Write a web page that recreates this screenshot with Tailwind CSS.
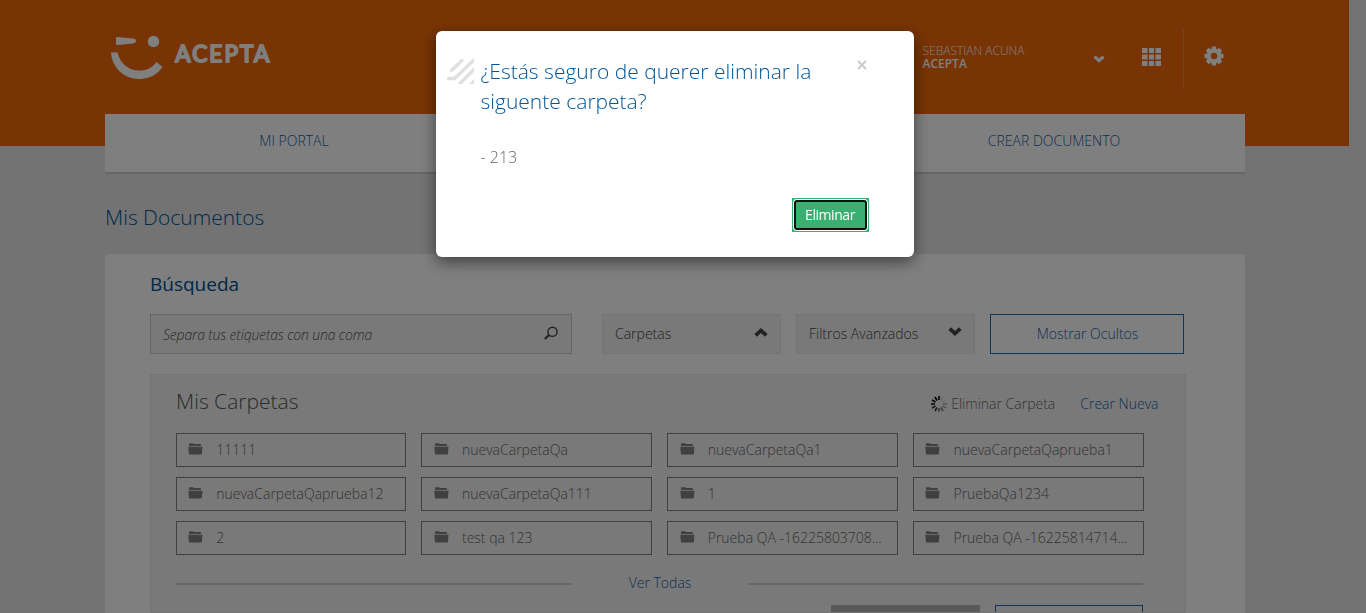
<!DOCTYPE html>
<html lang="es">
<head>
<meta charset="utf-8">
<title>Acepta - Mis Documentos</title>
<script src="https://cdn.jsdelivr.net/npm/@tailwindcss/browser@4"></script>
</head>
<body class="h-[613px] overflow-hidden bg-[#e6e6e6] font-['Open_Sans',sans-serif] text-sm font-light text-[#666]">
<svg class="hidden">
  <symbol id="folder" viewBox="0 0 15 12"><path d="M1 2V1q0-.7.7-.7H5q.6 0 .8.8h6.4q.8 0 .8.8V3H1zM.3 3.700h14.200l-.6 7q-.1.800-.900.800H1.800q-.8 0-.9-.8z" fill="currentColor"/></symbol>
  <symbol id="chev" viewBox="0 0 14 9"><path d="M3 .3L7 4l4-3.700 2.600 2.600L7 9 .4 2.900z" fill="currentColor"/></symbol>
</svg>
<div class="h-[613px] w-[1349px] overflow-hidden">
  <header class="h-[114px] bg-[#f06808] pl-[105px]">
    <div class="flex h-full w-[1140px] items-start">
      <svg class="mt-[30px] ml-1.5 h-[52px] w-[54px] shrink-0" viewBox="0 0 54 52" fill="#fff"><path d="M6 7q-1 0-1 1v5.500q0 1.500 1.500 1.400L22 13.400q3-.4 3-2.400t-3-2.400z"/><circle cx="42.500" cy="11.500" r="5.700"/><path d="M0 22.500h6.500C9 33 17 40.500 28 40.500c8 0 13-2.500 17.500-8.500l6 5C46 45 38 49 28 49 13 49 1 37.500 0 22.500z"/></svg>
      <svg class="mt-[37px] ml-[9px] h-[34px] w-[98px] shrink-0 font-['Lato',sans-serif] text-[22.500px] font-normal" fill="#fff" stroke="#fff" stroke-width="2" stroke-linejoin="round"><text x="1.200" y="25" textLength="94">ACEPTA</text></svg>
      <div class="mt-[44px] ml-[650.500px] w-[150px] shrink-0 text-xs leading-[13px] text-white"><div>SEBASTIAN ACUNA</div><div class="font-semibold">ACEPTA</div></div>
      <svg class="mt-[55px] ml-[20.500px] h-2 w-3 shrink-0 text-white"><use href="#chev"/></svg>
      <svg class="mt-12 ml-[37px] h-[18px] w-[19px] shrink-0" viewBox="0 0 19 18" fill="#fff"><path d="M0 0h5.500v5H0zM7 0h5v5H7zM13.500 0H19v5h-5.500zM0 6.500h5.500v5H0zM7 6.500h5v5H7zM13.500 6.500H19v5h-5.500zM0 13h5.500v5H0zM7 13h5v5H7zM13.500 13H19v5h-5.500z"/></svg>
      <div class="mt-[29px] ml-[22px] h-[60px] w-px shrink-0 bg-[#f5883d]"></div>
      <svg class="mt-[46px] ml-[19.500px] h-5 w-5 shrink-0" viewBox="0 0 20 20"><g fill="#fff"><circle cx="10" cy="10" r="7.600"/><g id="t"><rect x="7.700" y=".4" width="4.600" height="19.200" rx="1"/><rect x=".4" y="7.700" width="19.200" height="4.600" rx="1"/></g><use href="#t" transform="rotate(45 10 10)"/></g><circle cx="10" cy="10" r="3.200" fill="#f06808"/></svg>
    </div>
  </header>
  <div class="h-8 bg-[#f06808] pl-[105px]">
    <nav class="flex h-[60px] w-[1140px] border-b-2 border-[#cdcdcd] bg-white text-[#2060ac]">
      <a class="w-[378px] text-center leading-[54px]">MI PORTAL</a><span class="w-[381px]"></span><a class="w-[380px] text-center leading-[54px]">CREAR DOCUMENTO</a>
    </nav>
  </div>
  <main class="ml-[105px] h-[467px] w-[1140px] overflow-hidden pt-[56px]">
    <h1 class="h-[52px] text-[21px] leading-[31px] text-[#005596]">Mis Documentos</h1>
    <section class="h-[359px] overflow-hidden rounded-t bg-white pt-[16px] pl-[45px]">
      <h2 class="h-[44px] text-[19px] leading-[28px] font-normal text-[#005090]">Búsqueda</h2>
      <div class="flex h-10">
        <div class="flex w-[422px] justify-between border border-[#cbcbcb] bg-[#f2f2f2] pr-3 pl-3 leading-[40px] tracking-[-0.16px] text-[#555] italic">Separa tus etiquetas con una coma
          <svg class="mt-[11px] h-[15px] w-[16px]" viewBox="0 0 16 15" fill="none" stroke="#444"><circle cx="9.500" cy="5.800" r="4.600" stroke-width="1.400"/><path d="M6 9L1.800 13" stroke-width="2.200"/></svg></div>
        <div class="ml-[30px] flex w-[179px] justify-between border border-[#e8e8e8] bg-[#f2f2f2] px-3 leading-[38px] text-[#444]">Carpetas<svg class="mt-[13px] h-[9px] w-[14px] rotate-180"><use href="#chev"/></svg></div>
        <div class="ml-[15px] flex w-[179px] justify-between border border-[#e8e8e8] bg-[#f2f2f2] px-3 leading-[38px] text-[#444]">Filtros Avanzados<svg class="mt-[12px] h-[9px] w-[14px]"><use href="#chev"/></svg></div>
        <div class="ml-[15px] w-[194px] border border-[#2068b8] pl-px text-center leading-[38px] text-[#2060ac]">Mostrar Ocultos</div>
      </div>
      <div class="mt-5 h-[239px] w-[1036px] overflow-hidden border border-[#ebebeb] bg-[#f2f2f2] px-[25px]">
        <div class="flex h-[58px] w-[982.500px] justify-between">
          <h3 class="pt-[11px] text-[21px] leading-[31px] text-[#555]">Mis Carpetas</h3>
          <div class="flex pt-[19px] leading-[19px]"><svg class="mt-[2px] mr-[4px] h-4 w-4" viewBox="-8 -8 16 16" stroke-width="1.600"><g stroke="#000"><path d="M0-4V-8M-2-3.500L-4-7M-3.500-2L-7-4M-4 0H-8"/></g><g stroke="#333"><path d="M-3.500 2L-7 4M-2 3.500L-4 7"/></g><g stroke="#777"><path d="M0 4V8M2 3.500L4 7"/></g><g stroke="#aaa"><path d="M3.500 2L7 4M4 0H8"/></g><g stroke="#ddd"><path d="M3.500-2L7-4M2-3.500L4-7"/></g></svg><span class="text-[#666]">Eliminar Carpeta</span><span class="ml-[25px] text-[#2060ac]">Crear Nueva</span></div>
        </div>
        <div id="folders" class="-ml-[0.300px] grid w-[968px] grid-cols-4 gap-x-[15px] gap-y-2.5"></div>
        <div class="mt-[14px] flex h-7 w-[967px] items-center justify-between text-[#2060ac]"><hr class="mt-[2px] w-[395px] border-t-2 border-[#cbcbcb]"><span>Ver Todas</span><hr class="mt-[2px] w-[394px] border-t-2 border-[#cbcbcb]"></div>
        <div class="mt-2 flex w-[967px] justify-end gap-[15px]"><div class="h-9 w-[149px] bg-[#b2b2b2]"></div><div class="h-9 w-[148px] border border-[#2068b8]"></div></div>
      </div>
    </section>
  </main>
</div>
<div class="fixed inset-0 bg-black/50">
  <div role="dialog" class="mt-[31px] ml-[436px] h-[226px] w-[478px] rounded-md bg-white pl-[11px] shadow-[0_5px_15px_rgba(0,0,0,0.5)]">
    <div class="flex h-[112px] pt-[25px]">
      <svg class="mt-[2px] h-[26px] w-[27px] shrink-0" viewBox="0 0 27 26" fill="none" stroke="#e0e0e0" stroke-width="3.400"><path d="M4.500 12.500L15 2.500" stroke-linecap="round"/><path d="M1.500 20.500H7.500L27.500 1.500" stroke-linecap="round"/><path d="M12 26.500L28 10.500"/><path d="M22 26l5-5v5z" fill="#e0e0e0" stroke="none"/></svg>
      <h4 class="ml-[6.500px] w-[370.500px] text-[21px] leading-[30px] text-[#005596]">¿Estás seguro de querer eliminar la siguente carpeta?</h4>
      <svg class="mt-[4px] ml-[6px] h-[10px] w-[10px]" viewBox="0 0 10 10"><path d="M1 1l8 8M9 1l-8 8" stroke="#ccc" stroke-width="2"/></svg>
    </div>
    <p class="h-[55px] pl-[33.500px] text-base leading-[28px]">- 213</p>
    <div class="ml-[345px] h-[34px] w-[77px] bg-[#39b070] p-px"><button class="block h-8 w-[75px] rounded-[4px] bg-white p-px"><span class="block h-[30px] rounded-[3px] border-2 border-[#101010] bg-[#39b070] pr-px leading-[26px] font-normal tracking-[-0.45px] text-white">Eliminar</span></button></div>
  </div>
</div>
<script>
document.getElementById('folders').innerHTML = ['11111','nuevaCarpetaQa','nuevaCarpetaQa1','nuevaCarpetaQaprueba1','nuevaCarpetaQaprueba12','nuevaCarpetaQa111','1','PruebaQa1234','2','test qa 123','Prueba QA -16225803708...','Prueba QA -16225814714...'].map(n =>
 `<div class="flex h-[34px] border border-[#808080] pl-[11.500px] leading-[32px] whitespace-nowrap text-[#666]"><svg class="mt-[9px] mr-[13px] h-3 w-[15px] shrink-0 text-[#808080]"><use href="#folder"/></svg>${n}</div>`).join('');
</script>
</body>
</html>
